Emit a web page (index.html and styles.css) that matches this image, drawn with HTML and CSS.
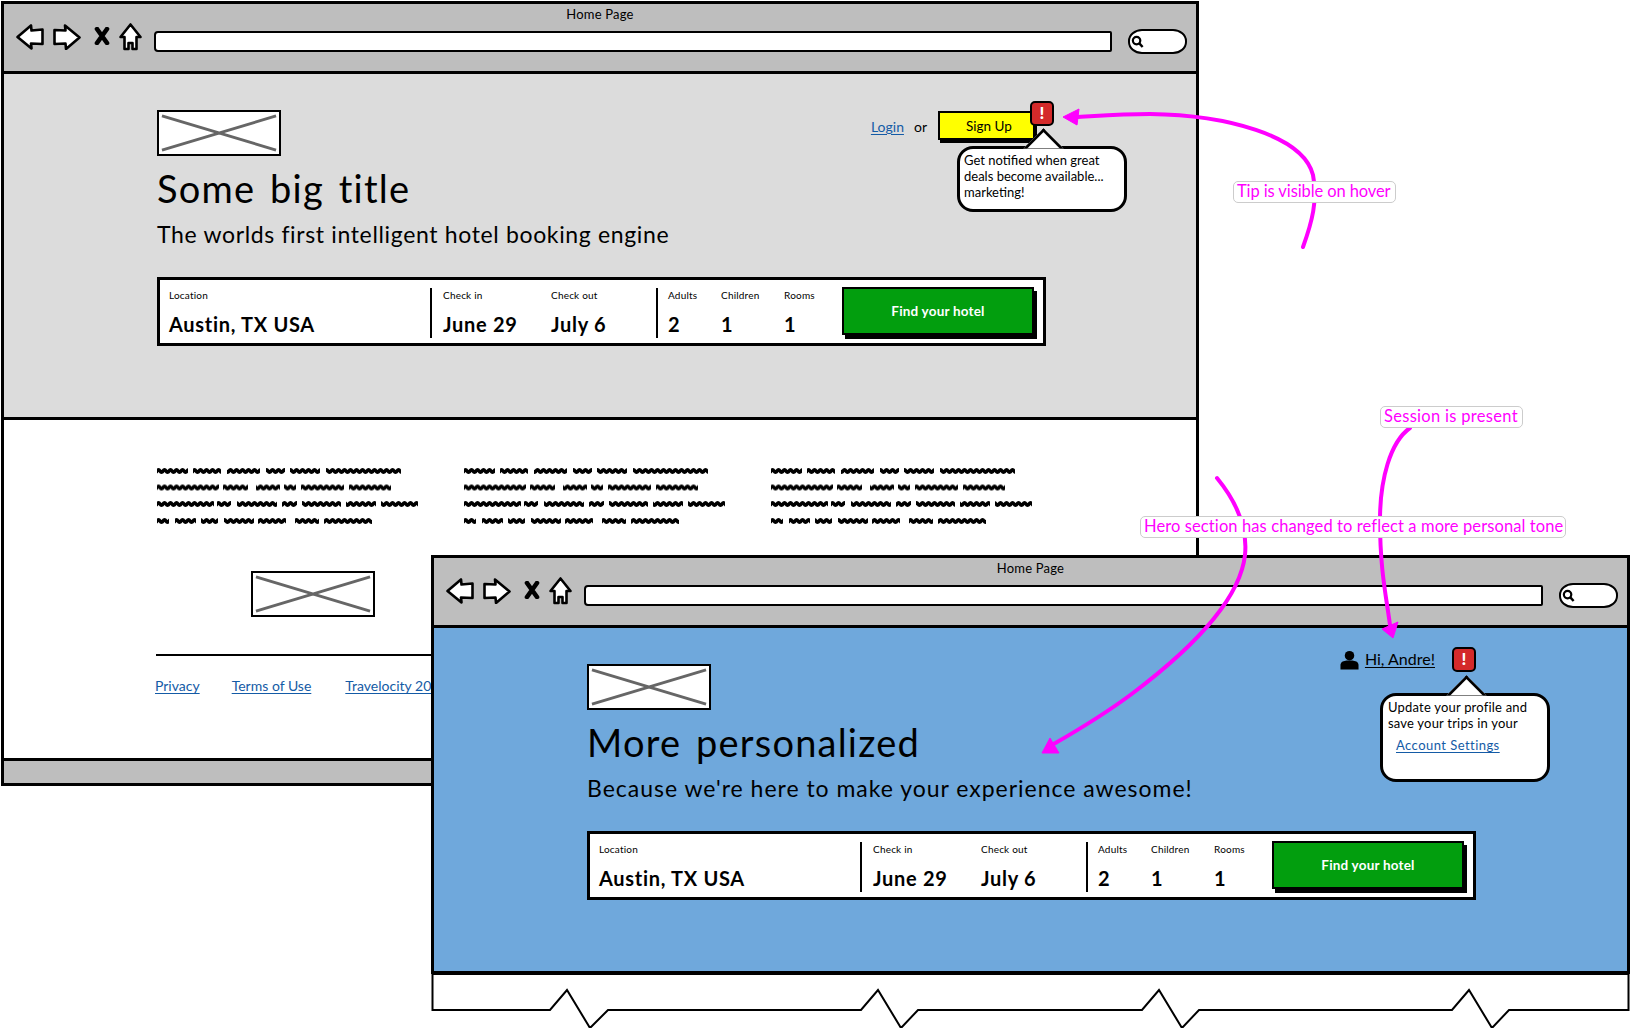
FILE: index.html
```html
<!DOCTYPE html>
<html lang="en">
<head>
  <meta charset="UTF-8" />
  <title>Home Page wireframes</title>
  <link rel="stylesheet" href="styles.css">
</head>
<body>
  <svg class="defs" width="0" height="0">
    <defs>
      <symbol id="ico-back" viewBox="0 0 28 26">
        <path class="ico-line" d="M1.5 13 L15 1.5 L15.5 6.5 L26.5 5.5 L26.5 20 L15 19.5 L15.5 24.5 Z" />
      </symbol>
      <symbol id="ico-forward" viewBox="0 0 28 26">
        <path class="ico-line" d="M1.5 6 L12.5 6.5 L12 1.5 L26.5 13.5 L13 25 L12.5 19.5 L1.5 20 Z" />
      </symbol>
      <symbol id="ico-stop" viewBox="0 0 16 18">
        <path class="ico-x" d="M3 2 L13 16 M13 2 L3 16" />
      </symbol>
      <symbol id="ico-home" viewBox="0 0 23 28">
        <path class="ico-line" d="M11.5 1.5 L21.5 14 L17.5 14 L17.5 26 L13.5 26 L13.5 20 L9.5 20 L9.5 26 L5.5 26 L5.5 14 L1.5 14 Z" />
      </symbol>
      <symbol id="ico-search" viewBox="0 0 14 14">
        <circle cx="6" cy="6" r="4" fill="none" stroke="#000" stroke-width="2.4" />
        <path d="M9 9 L12.5 13" stroke="#000" stroke-width="2.6" />
      </symbol>
      <symbol id="ico-user" viewBox="0 0 20 20">
        <circle cx="10" cy="5.5" r="5" />
        <path d="M0.5 20 L0.5 15 C1 11.5 4 11 7 10.5 L13 10.5 C16 11 19 11.5 19.5 15 L19.5 20 Z" />
      </symbol>
      <pattern id="squiggle" width="6" height="8" patternUnits="userSpaceOnUse">
        <path d="M-3 4 Q-1.5 6.4 0 4 T3 4 T6 4 T9 4" fill="none" stroke="#000" stroke-width="3.4" />
      </pattern>
      <symbol id="scribble-para" viewBox="0 0 264 58">
        <g fill="url(#squiggle)">
          <g>
            <rect x="0" y="0" width="31" height="8" /><rect x="36" y="0" width="28" height="8" /><rect x="70" y="0" width="33" height="8" /><rect x="109" y="0" width="19" height="8" /><rect x="133" y="0" width="30" height="8" /><rect x="169" y="0" width="75" height="8" />
          </g>
          <g transform="translate(0 16.5)">
            <rect x="0" y="0" width="62" height="8" /><rect x="66" y="0" width="25" height="8" /><rect x="99" y="0" width="24" height="8" /><rect x="127" y="0" width="12" height="8" /><rect x="144" y="0" width="43" height="8" /><rect x="192" y="0" width="42" height="8" />
          </g>
          <g transform="translate(0 33)">
            <rect x="0" y="0" width="57" height="8" /><rect x="60" y="0" width="14" height="8" /><rect x="80" y="0" width="40" height="8" /><rect x="125" y="0" width="15" height="8" /><rect x="145" y="0" width="39" height="8" /><rect x="189" y="0" width="30" height="8" /><rect x="224" y="0" width="37" height="8" />
          </g>
          <g transform="translate(0 50)">
            <rect x="0" y="0" width="12" height="8" /><rect x="18" y="0" width="21" height="8" /><rect x="44" y="0" width="17" height="8" /><rect x="67" y="0" width="30" height="8" /><rect x="101" y="0" width="28" height="8" /><rect x="138" y="0" width="24" height="8" /><rect x="167" y="0" width="48" height="8" />
          </g>
        </g>
      </symbol>
      <symbol id="placeholder-x" viewBox="0 0 120 40" preserveAspectRatio="none">
        <path d="M1 2 L119 38 M119 2 L1 38" stroke="#666" stroke-width="3" fill="none" />
      </symbol>
    </defs>
  </svg>

  <!-- logged out -->
  <div class="win win-back">
    <div class="chrome">
      <div class="chrome-title">Home Page</div>
      <div class="toolbar">
        <svg class="ico-nav ico-back"><use href="#ico-back" /></svg>
        <svg class="ico-nav ico-forward"><use href="#ico-forward" /></svg>
        <svg class="ico-nav ico-stop"><use href="#ico-stop" /></svg>
        <svg class="ico-nav ico-home"><use href="#ico-home" /></svg>
        <div class="address"></div>
        <div class="search-pill"><svg class="ico-search"><use href="#ico-search" /></svg></div>
      </div>
    </div>
    <div class="hero hero-gray">
      <div class="hero-top">
        <div class="hero-intro">
          <div class="logo"><svg><use href="#placeholder-x" /></svg></div>
          <h1>Some big title</h1>
          <p class="tagline tagline-tight">The worlds first intelligent hotel booking engine</p>
        </div>
        <div class="actions">
          <a class="link" href="#">Login</a>
          <span class="or">or</span>
          <div class="signup">Sign Up
            <span class="alert">!</span>
            <div class="bubble bubble-signup">Get notified when great deals become available... marketing!</div>
          </div>
        </div>
      </div>
      <div class="finder">
        <div class="finder-group group-location">
          <div class="field"><span class="field-label">Location</span><span class="field-value">Austin, TX USA</span></div>
        </div>
        <div class="finder-group group-dates">
          <div class="field w-checkin"><span class="field-label">Check in</span><span class="field-value">June 29</span></div>
          <div class="field"><span class="field-label">Check out</span><span class="field-value">July 6</span></div>
        </div>
        <div class="finder-group group-guests">
          <div class="field w-adults"><span class="field-label">Adults</span><span class="field-value">2</span></div>
          <div class="field w-children"><span class="field-label">Children</span><span class="field-value">1</span></div>
          <div class="field w-rooms"><span class="field-label">Rooms</span><span class="field-value">1</span></div>
        </div>
        <div class="find-btn">Find your hotel</div>
      </div>
    </div>
    <div class="page-body">
      <div class="scribbles">
        <svg class="scribble"><use href="#scribble-para" /></svg>
        <svg class="scribble"><use href="#scribble-para" /></svg>
        <svg class="scribble"><use href="#scribble-para" /></svg>
      </div>
      <div class="logo logo-white"><svg><use href="#placeholder-x" /></svg></div>
      <hr class="foot-rule" />
      <div class="foot-links">
        <a class="link foot-first" href="#">Privacy</a>
        <a class="link" href="#">Terms of Use</a>
        <a class="link" href="#">Travelocity 2015</a>
      </div>
    </div>
    <div class="win-foot"></div>
  </div>

  <!-- logged in -->
  <div class="win win-front">
    <div class="chrome">
      <div class="chrome-title">Home Page</div>
      <div class="toolbar">
        <svg class="ico-nav ico-back"><use href="#ico-back" /></svg>
        <svg class="ico-nav ico-forward"><use href="#ico-forward" /></svg>
        <svg class="ico-nav ico-stop"><use href="#ico-stop" /></svg>
        <svg class="ico-nav ico-home"><use href="#ico-home" /></svg>
        <div class="address"></div>
        <div class="search-pill"><svg class="ico-search"><use href="#ico-search" /></svg></div>
      </div>
    </div>
    <div class="hero hero-blue">
      <div class="hero-top">
        <div class="hero-intro">
          <div class="logo"><svg><use href="#placeholder-x" /></svg></div>
          <h1>More personalized</h1>
          <p class="tagline tagline-wide">Because we're here to make your experience awesome!</p>
        </div>
        <div class="account">
          <svg class="ico-user"><use href="#ico-user" /></svg>
          <a class="hi-link" href="#">Hi, Andre!</a>
          <span class="alert alert-inline">!</span>
          <div class="bubble bubble-account">
            Update your profile and save your trips in your
            <a class="link bubble-link" href="#">Account Settings</a>
          </div>
        </div>
      </div>
      <div class="finder">
        <div class="finder-group group-location">
          <div class="field"><span class="field-label">Location</span><span class="field-value">Austin, TX USA</span></div>
        </div>
        <div class="finder-group group-dates">
          <div class="field w-checkin"><span class="field-label">Check in</span><span class="field-value">June 29</span></div>
          <div class="field"><span class="field-label">Check out</span><span class="field-value">July 6</span></div>
        </div>
        <div class="finder-group group-guests">
          <div class="field w-adults"><span class="field-label">Adults</span><span class="field-value">2</span></div>
          <div class="field w-children"><span class="field-label">Children</span><span class="field-value">1</span></div>
          <div class="field w-rooms"><span class="field-label">Rooms</span><span class="field-value">1</span></div>
        </div>
        <div class="find-btn">Find your hotel</div>
      </div>
    </div>
    <svg class="torn" width="1199" height="56" viewBox="0 0 1199 56">
      <path d="M1.5 0 L1.5 36 L119 36 L136 16 L159 54 L177 36 L430 36 L447 16 L470 54 L487 36 L711 36 L728 16 L751 54 L768 36 L1021 36 L1038 16 L1061 54 L1078 36 L1197.5 36 L1197.5 0 Z" />
    </svg>
  </div>

  <!-- annotation arrows -->
  <svg class="arrows" width="1631" height="1028" viewBox="0 0 1631 1028">
    <path class="arrow-line" d="M1303 247 C1312 222 1318 200 1313 175 C1303 135 1225 115 1150 114 C1120 114 1095 116 1075 117" />
    <path class="arrow-head" d="M1063 117 L1079 109 L1077 125 Z" />
    <path class="arrow-line" d="M1410 428 C1390 442 1380 480 1380 520 C1380 570 1386 595 1390 625" />
    <path class="arrow-head" d="M1393 638 L1382 629 L1398 622 Z" />
    <path class="arrow-line" d="M1217 478 C1235 500 1248 525 1245 555 C1240 600 1190 650 1133 693 C1105 714 1080 729 1052 745" />
    <path class="arrow-head" d="M1042 753 L1050 738 L1059 753 Z" />
  </svg>

  <div class="note note-tip">Tip is visible on hover</div>
  <div class="note note-session">Session is present</div>
  <div class="note note-hero">Hero section has changed to reflect a more personal tone</div>
</body>
</html>
```

FILE: styles.css
```css
* {
  box-sizing: border-box;
}
html, body {
  margin: 0;
  padding: 0;
}
body {
  position: relative;
  width: 1631px;
  height: 1028px;
  overflow: hidden;
  background: #fff;
  color: #000;
  font-family: "Lato", "Noto Sans", sans-serif;
}
.defs {
  position: absolute;
}
h1, p {
  margin: 0;
}

/* windows sit on a free canvas */
.win {
  position: absolute;
  display: flex;
  flex-direction: column;
  background: #fff;
  border: 3px solid #000;
}
.win-back {
  left: 1px;
  top: 1px;
  width: 1198px;
  height: 785px;
}
.win-front {
  left: 431px;
  top: 555px;
  width: 1199px;
  border-bottom: 0;
}

.chrome {
  height: 70px;
  flex: none;
  background: #bebebe;
  border-bottom: 3px solid #000;
}
.chrome-title {
  height: 22px;
  padding-top: 1px;
  text-align: center;
  font-size: 13px;
  line-height: 18px;
  letter-spacing: 0.2px;
}
.toolbar {
  display: flex;
  align-items: center;
  height: 30px;
  padding: 0 9px 0 12px;
}
.ico-nav {
  flex: none;
  margin-bottom: 8px;
}
.ico-line {
  fill: #fff;
  stroke: #000;
  stroke-width: 2.6;
  stroke-linejoin: round;
}
.ico-x {
  fill: none;
  stroke: #000;
  stroke-width: 4.6;
  stroke-linecap: round;
}
.ico-back, .ico-forward {
  width: 28px;
  height: 26px;
}
.ico-forward {
  margin-left: 9px;
}
.ico-stop {
  width: 16px;
  height: 18px;
  margin-left: 13px;
  margin-bottom: 10px;
}
.ico-home {
  width: 23px;
  height: 28px;
  margin-left: 9px;
}
.address {
  flex: 1;
  height: 21px;
  margin-left: 12px;
  background: #fff;
  border: 2.5px solid #000;
  border-radius: 4px 2px 2px 4px;
}
.search-pill {
  flex: none;
  display: flex;
  align-items: center;
  width: 59px;
  height: 25px;
  margin-left: 16px;
  padding-left: 1px;
  background: #fff;
  border: 2.5px solid #000;
  border-radius: 14px / 12px;
}
.ico-search {
  width: 13px;
  height: 13px;
}

.hero {
  position: relative;
  height: 346px;
  flex: none;
  padding: 36px 0 0 153px;
  border-bottom: 3px solid #000;
}
.hero-gray {
  background: #dcdcdc;
}
.hero-blue {
  background: #6fa8dc;
}
.hero-top {
  display: flex;
  justify-content: space-between;
  width: 888px;
  height: 167px;
}
.logo {
  width: 124px;
  height: 46px;
  padding: 2px;
  background: #fff;
  border: 2.5px solid #000;
}
.logo svg {
  display: block;
  width: 100%;
  height: 100%;
}
h1 {
  margin-top: 9px;
  font-size: 38px;
  font-weight: 400;
  line-height: 46px;
  word-spacing: 4px;
  letter-spacing: 1.2px;
}
.tagline {
  margin-top: 8px;
  font-size: 23px;
  line-height: 30px;
}
.tagline-tight {
  letter-spacing: 0.65px;
}
.tagline-wide {
  letter-spacing: 0.98px;
}

.link {
  color: #145ba6;
  text-decoration: underline;
  text-underline-offset: 2px;
}
.actions {
  position: relative;
  display: flex;
  align-items: flex-start;
  height: 30px;
  margin-top: 1px;
  padding-right: 10px;
  font-size: 14px;
  line-height: 31px;
}
.or {
  margin-left: 10px;
}
.signup {
  position: relative;
  width: 97px;
  height: 29px;
  margin-left: 11px;
  padding-left: 26px;
  background: #ff0;
  border: 2px solid #000;
  box-shadow: 2px 3px 0 #000;
  font-size: 13.5px;
  line-height: 26px;
}
.alert {
  display: block;
  width: 24px;
  height: 25px;
  background: #d42a2a;
  border: 2.5px solid #000;
  border-radius: 5px;
  color: #fff;
  font-size: 17px;
  font-weight: 900;
  line-height: 20px;
  text-align: center;
}
.signup .alert {
  position: absolute;
  right: -21px;
  top: -12px;
}
.bubble {
  position: absolute;
  z-index: 2;
  width: 170px;
  padding: 3px 4px;
  background: #fff;
  border: 3px solid #000;
  border-radius: 16px;
  font-size: 13px;
  line-height: 16px;
  color: #000;
}
.bubble::before {
  content: "";
  position: absolute;
  left: 50%;
  top: -15px;
  width: 26px;
  height: 26px;
  margin-left: -13px;
  background: #fff;
  border-top: 3px solid #000;
  border-left: 3px solid #000;
  transform: rotate(45deg);
  clip-path: polygon(0 0, 100% 0, 0 100%);
}
.bubble-signup {
  left: 17px;
  top: 33px;
  height: 66px;
}
.account {
  position: relative;
  display: flex;
  align-items: flex-start;
  height: 26px;
  margin: -17px -1px 0 0;
}
.ico-user {
  width: 19px;
  height: 20px;
  margin-top: 3px;
}
.hi-link {
  margin: 1px 0 0 6px;
  color: #000;
  font-size: 16px;
  line-height: 22px;
  text-decoration: underline;
  text-underline-offset: 2px;
}
.alert-inline {
  margin-left: 17px;
}
.bubble-account {
  right: -74px;
  top: 46px;
  height: 89px;
  padding-left: 5px;
  letter-spacing: 0.2px;
}
.bubble-link {
  display: block;
  margin: 6px 0 0 8px;
  letter-spacing: 0.45px;
}

/* search box */
.finder {
  display: flex;
  align-items: flex-start;
  width: 889px;
  height: 69px;
  background: #fff;
  border: 3px solid #000;
}
.finder-group {
  display: flex;
  height: 50px;
  margin-top: 8px;
  border-right: 2px solid #000;
}
.group-location {
  width: 272px;
  padding-left: 9px;
}
.group-dates {
  width: 226px;
  padding-left: 11px;
}
.group-guests {
  width: 184px;
  padding-left: 10px;
  border-right: 0;
}
.field {
  display: flex;
  flex-direction: column;
}
.w-checkin {
  width: 108px;
}
.w-adults {
  width: 53px;
}
.w-children {
  width: 63px;
}
.w-rooms {
  width: 58px;
}
.field-label {
  height: 24px;
  font-size: 10px;
  line-height: 14px;
  letter-spacing: 0.2px;
}
.field-value {
  font-size: 20px;
  font-weight: 700;
  line-height: 25px;
  letter-spacing: 0.7px;
}
.find-btn {
  width: 192px;
  height: 48px;
  margin-top: 7px;
  background: #029e0e;
  border: 2px solid #000;
  box-shadow: 3px 4px 0 #000;
  color: #fff;
  font-size: 13.5px;
  font-weight: 700;
  line-height: 44px;
  text-align: center;
  letter-spacing: 0.2px;
}

/* below the hero */
.page-body {
  flex: 1;
  padding: 47px 0 0 153px;
}
.scribbles {
  display: flex;
  gap: 43px;
}
.scribble {
  display: block;
  width: 264px;
  height: 58px;
  flex: none;
}
.logo-white {
  margin: 46px 0 0 94px;
}
.foot-rule {
  width: 890px;
  height: 0;
  margin: 37px 0 0 -1px;
  border: 0;
  border-top: 2px solid #000;
}
.foot-links {
  display: flex;
  gap: 34px;
  margin: 20px 0 0 -2px;
  font-size: 14px;
  line-height: 20px;
}
.foot-first {
  margin-right: -2px;
}
.win-foot {
  height: 25px;
  flex: none;
  background: #bebebe;
  border-top: 3px solid #000;
}

.torn {
  position: absolute;
  left: -3px;
  top: 100%;
}
.torn path {
  fill: #fff;
  stroke: #000;
  stroke-width: 2;
}

/* annotations */
.arrows {
  position: absolute;
  left: 0;
  top: 0;
  z-index: 5;
  pointer-events: none;
}
.arrow-line {
  fill: none;
  stroke: #f0f;
  stroke-width: 4;
  stroke-linecap: round;
}
.arrow-head {
  fill: #f0f;
  stroke: #f0f;
  stroke-width: 1;
  stroke-linejoin: round;
}
.note {
  position: absolute;
  z-index: 6;
  height: 22px;
  padding: 0 3px;
  background: #fff;
  border: 1px solid #ccc;
  border-radius: 5px;
  color: #f0f;
  font-size: 16.5px;
  line-height: 18px;
  white-space: nowrap;
  letter-spacing: 0.1px;
}
.note-tip {
  left: 1233px;
  top: 181px;
  width: 163px;
  letter-spacing: -0.1px;
}
.note-session {
  left: 1380px;
  top: 406px;
  width: 143px;
  letter-spacing: 0.3px;
}
.note-hero {
  left: 1140px;
  top: 516px;
  width: 426px;
}
```
